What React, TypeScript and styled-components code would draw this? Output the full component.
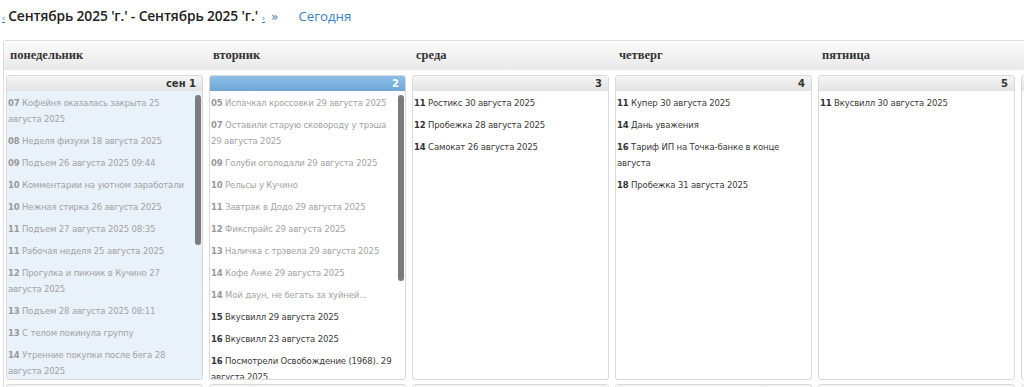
import styled, { createGlobalStyle } from "styled-components";

type CalEvent = { time: string; title: string; past?: boolean };
type Day = { label: string; today?: boolean; tint?: boolean; events: CalEvent[]; thumb?: [number, number] };

const dayNames = ["понедельник", "вторник", "среда", "четверг", "пятница", "суббота", "воскресенье"];

const firstWeek: Day[] = [
  {
    label: "сен 1",
    tint: true,
    thumb: [4, 150],
    events: [
      { time: "07", title: "Кофейня оказалась закрыта 25 августа 2025", past: true },
      { time: "08", title: "Неделя физухи 18 августа 2025", past: true },
      { time: "09", title: "Подъем 26 августа 2025 09:44", past: true },
      { time: "10", title: "Комментарии на уютном заработали", past: true },
      { time: "10", title: "Нежная стирка 26 августа 2025", past: true },
      { time: "11", title: "Подъем 27 августа 2025 08:35", past: true },
      { time: "11", title: "Рабочая неделя 25 августа 2025", past: true },
      { time: "12", title: "Прогулка и пикник в Кучино 27 августа 2025", past: true },
      { time: "13", title: "Подъем 28 августа 2025 08:11", past: true },
      { time: "13", title: "С телом покинула группу", past: true },
      { time: "14", title: "Утренние покупки после бега 28 августа 2025", past: true },
    ],
  },
  {
    label: "2",
    today: true,
    thumb: [4, 186],
    events: [
      { time: "05", title: "Испачкал кроссовки 29 августа 2025", past: true },
      { time: "07", title: "Оставили старую сковороду у трэша 29 августа 2025", past: true },
      { time: "09", title: "Голуби оголодали 29 августа 2025", past: true },
      { time: "10", title: "Рельсы у Кучино", past: true },
      { time: "11", title: "Завтрак в Додо 29 августа 2025", past: true },
      { time: "12", title: "Фикспрайс 29 августа 2025", past: true },
      { time: "13", title: "Наличка с трэвела 29 августа 2025", past: true },
      { time: "14", title: "Кофе Анке 29 августа 2025", past: true },
      { time: "14", title: "Мой даун, не бегать за хуйней...", past: true },
      { time: "15", title: "Вкусвилл 29 августа 2025" },
      { time: "16", title: "Вкусвилл 23 августа 2025" },
      { time: "16", title: "Посмотрели Освобождение (1968). 29 августа 2025" },
    ],
  },
  {
    label: "3",
    events: [
      { time: "11", title: "Ростикс 30 августа 2025" },
      { time: "12", title: "Пробежка 28 августа 2025" },
      { time: "14", title: "Самокат 26 августа 2025" },
    ],
  },
  {
    label: "4",
    events: [
      { time: "11", title: "Купер 30 августа 2025" },
      { time: "14", title: "Дань уважения" },
      { time: "16", title: "Тариф ИП на Точка-банке в конце августа" },
      { time: "18", title: "Пробежка 31 августа 2025" },
    ],
  },
  { label: "5", events: [{ time: "11", title: "Вкусвилл 30 августа 2025" }] },
  { label: "6", events: [] },
  { label: "7", events: [] },
];

const secondWeek: Day[] = ["8", "9", "10", "11", "12", "13", "14"].map((label) => ({ label, events: [] }));

const GlobalStyle = createGlobalStyle`
  html, body {
    margin: 0;
    background: #fff;
    overflow: hidden;
  }
  body {
    font-family: "DejaVu Sans", Verdana, sans-serif;
  }
`;

const Page = styled.div`
  width: 1024px;
  height: 387px;
  overflow: hidden;
`;

const Toolbar = styled.div`
  display: flex;
  align-items: baseline;
  height: 40px;
  padding: 0 0 0 2px;
  box-sizing: border-box;
  line-height: 31px;
`;

const Arrow = styled.a`
  color: #3a7cc4;
  font-family: "DejaVu Sans", sans-serif;
  font-size: 8px;
  text-decoration: underline;
  margin: 0 3px 0 0;
`;

const Title = styled.h2`
  margin: 0;
  font-family: "Open Sans", "Liberation Sans", sans-serif;
  font-size: 13.8px;
  font-weight: 600;
  color: #222;
  letter-spacing: -0.12px;
`;

const Jump = styled.a`
  color: #3a7cc4;
  font-family: "DejaVu Sans", sans-serif;
  font-size: 12px;
  margin-left: 3px;
`;

const Today = styled.a`
  color: #3d7fc1;
  font-family: "Open Sans", "Liberation Sans", sans-serif;
  font-size: 13.3px;
  margin-left: 20px;
`;

const Calendar = styled.div`
  margin-left: 3px;
  width: 1440px;
  border-top: 1px solid #dedede;
  border-left: 1px solid #dedede;
  border-top-left-radius: 3px;
`;

const HeadRow = styled.div`
  display: grid;
  grid-template-columns: repeat(7, 197px);
  column-gap: 6px;
  padding-left: 2px;
  height: 29px;
  align-items: center;
  background: linear-gradient(#fbfbfb, #e9e9e9);
  border-bottom: 1px solid #fff;
`;

const DayName = styled.div<{ $weekend?: boolean }>`
  padding-left: 4px;
  font-family: "Liberation Serif", "DejaVu Serif", serif;
  font-weight: bold;
  font-size: 12.5px;
  color: ${(p) => (p.$weekend ? "#e07a1c" : "#333")};
`;

const WeekRow = styled.div`
  display: grid;
  grid-template-columns: repeat(7, 197px);
  column-gap: 6px;
  padding: 4px 0 0 2px;
`;

const DayBox = styled.div<{ $tint?: boolean }>`
  position: relative;
  height: 303px;
  border: 1px solid #d9d9d9;
  border-radius: 3px;
  background: ${(p) => (p.$tint ? "#e9f1fb" : "#fff")};
  overflow: hidden;
`;

const DayHead = styled.div<{ $today?: boolean }>`
  height: 15px;
  line-height: 15px;
  padding-right: 6px;
  text-align: right;
  font-size: 10px;
  font-weight: bold;
  color: ${(p) => (p.$today ? "#fff" : "#333")};
  background: ${(p) => (p.$today ? "linear-gradient(#8fbfe7, #6ca6d9)" : "linear-gradient(#f5f5f5, #e3e3e3)")};
`;

const EventList = styled.ul<{ $scroll?: boolean }>`
  list-style: none;
  margin: 0;
  padding: 4px ${(p) => (p.$scroll ? "12px" : "4px")} 0 1px;
`;

const EventItem = styled.li<{ $past?: boolean }>`
  font-size: 8.5px;
  letter-spacing: -0.15px;
  line-height: 16px;
  margin-bottom: 6px;
  color: ${(p) => (p.$past ? "#a3a3a3" : "#3a3a3a")};

  b {
    color: ${(p) => (p.$past ? "#999" : "#333")};
  }
`;

const Thumb = styled.div`
  position: absolute;
  right: 1px;
  width: 6px;
  border-radius: 3px;
  background: #7c7c7c;
`;

function DayCell({ day }: { day: Day }) {
  return (
    <DayBox $tint={day.tint}>
      <DayHead $today={day.today}>{day.label}</DayHead>
      <EventList $scroll={!!day.thumb}>
        {day.events.map((ev, i) => (
          <EventItem key={i} $past={ev.past}>
            <b>{ev.time}</b> {ev.title}
          </EventItem>
        ))}
      </EventList>
      {day.thumb && <Thumb style={{ top: 15 + day.thumb[0], height: day.thumb[1] }} />}
    </DayBox>
  );
}

export default function App() {
  return (
    <Page>
      <GlobalStyle />
      <Toolbar>
        <Arrow>‹</Arrow>
        <Title>Сентябрь 2025 'г.' - Сентябрь 2025 'г.'</Title>
        <Arrow style={{ marginLeft: 4 }}>›</Arrow>
        <Jump>»</Jump>
        <Today>Сегодня</Today>
      </Toolbar>
      <Calendar>
        <HeadRow>
          {dayNames.map((n, i) => (
            <DayName key={n} $weekend={i > 4}>
              {n}
            </DayName>
          ))}
        </HeadRow>
        <WeekRow>
          {firstWeek.map((d) => (
            <DayCell key={d.label} day={d} />
          ))}
        </WeekRow>
        <WeekRow>
          {secondWeek.map((d) => (
            <DayCell key={d.label} day={d} />
          ))}
        </WeekRow>
      </Calendar>
    </Page>
  );
}
